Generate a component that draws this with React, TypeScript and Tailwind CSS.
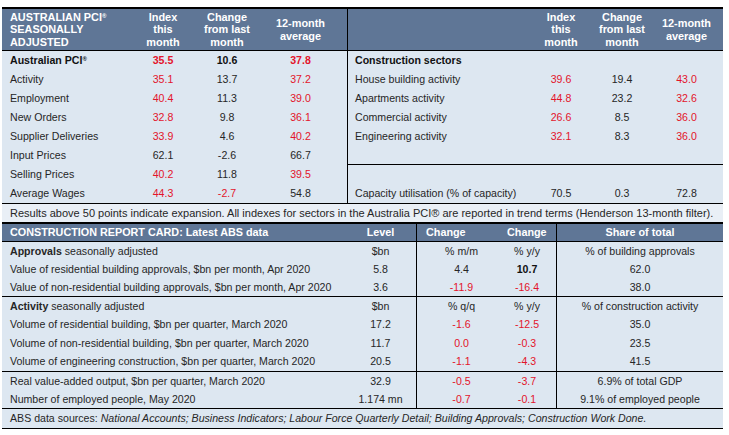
const RED = "text-[#e3142b]";

type Cell = { t: string; red?: boolean; bold?: boolean };

const pciRows: { label: string; bold?: boolean; v: Cell[] }[] = [
  { label: "Australian PCI", bold: true, v: [{ t: "35.5", red: true }, { t: "10.6" }, { t: "37.8", red: true }] },
  { label: "Activity", v: [{ t: "35.1", red: true }, { t: "13.7" }, { t: "37.2", red: true }] },
  { label: "Employment", v: [{ t: "40.4", red: true }, { t: "11.3" }, { t: "39.0", red: true }] },
  { label: "New Orders", v: [{ t: "32.8", red: true }, { t: "9.8" }, { t: "36.1", red: true }] },
  { label: "Supplier Deliveries", v: [{ t: "33.9", red: true }, { t: "4.6" }, { t: "40.2", red: true }] },
  { label: "Input Prices", v: [{ t: "62.1" }, { t: "-2.6" }, { t: "66.7" }] },
  { label: "Selling Prices", v: [{ t: "40.2", red: true }, { t: "11.8" }, { t: "39.5", red: true }] },
  { label: "Average Wages", v: [{ t: "44.3", red: true }, { t: "-2.7", red: true }, { t: "54.8" }] },
];

const sectorRows: { label: string; v: Cell[] }[] = [
  { label: "House building activity", v: [{ t: "39.6", red: true }, { t: "19.4" }, { t: "43.0", red: true }] },
  { label: "Apartments activity", v: [{ t: "44.8", red: true }, { t: "23.2" }, { t: "32.6", red: true }] },
  { label: "Commercial activity", v: [{ t: "26.6", red: true }, { t: "8.5" }, { t: "36.0", red: true }] },
  { label: "Engineering activity", v: [{ t: "32.1", red: true }, { t: "8.3" }, { t: "36.0", red: true }] },
];

type CardRow = { label: React.ReactNode; level: string; c1: Cell; c2: Cell; share: string };

const groups: { h: string; rows: CardRow[] }[] = [
  {
    h: "h-[55px]",
    rows: [
      { label: <span><b>Approvals</b> seasonally adjusted</span>, level: "$bn", c1: { t: "% m/m" }, c2: { t: "% y/y" }, share: "% of building approvals" },
      { label: "Value of residential building approvals, $bn per month, Apr 2020", level: "5.8", c1: { t: "4.4" }, c2: { t: "10.7", bold: true }, share: "62.0" },
      { label: "Value of non-residential building approvals, $bn per month, Apr 2020", level: "3.6", c1: { t: "-11.9", red: true }, c2: { t: "-16.4", red: true }, share: "38.0" },
    ],
  },
  {
    h: "h-[75px]",
    rows: [
      { label: <span><b>Activity</b> seasonally adjusted</span>, level: "$bn", c1: { t: "% q/q" }, c2: { t: "% y/y" }, share: "% of construction activity" },
      { label: "Volume of residential building, $bn per quarter, March 2020", level: "17.2", c1: { t: "-1.6", red: true }, c2: { t: "-12.5", red: true }, share: "35.0" },
      { label: "Volume of non-residential building, $bn per quarter, March 2020", level: "11.7", c1: { t: "0.0", red: true }, c2: { t: "-0.3", red: true }, share: "23.5" },
      { label: "Volume of engineering construction, $bn per quarter, March 2020", level: "20.5", c1: { t: "-1.1", red: true }, c2: { t: "-4.3", red: true }, share: "41.5" },
    ],
  },
  {
    h: "h-[37px]",
    rows: [
      { label: "Real value-added output, $bn per quarter, March 2020", level: "32.9", c1: { t: "-0.5", red: true }, c2: { t: "-3.7", red: true }, share: "6.9% of total GDP" },
      { label: "Number of employed people, May 2020", level: "1.174 mn", c1: { t: "-0.7", red: true }, c2: { t: "-0.1", red: true }, share: "9.1% of employed people" },
    ],
  },
];

function Val({ c, bold, w }: { c: Cell; bold?: boolean; w: string }) {
  return (
    <div className={`${w} text-center ${c.red ? RED : ""} ${bold || c.bold ? "font-bold text-[#111]" : ""}`}>{c.t}</div>
  );
}

export default function App() {
  return (
    <div className="w-[729px] h-[435px] bg-white pt-[7px] pl-[2px] font-['Liberation_Sans',Arial,sans-serif] text-[10.6px] leading-none text-[#262626]">
      <div className="w-[721px] bg-[#dde7f1]">
        {/* PCI block */}
        <div className="flex border-t-2 border-black">
          <div className="w-[345px] flex flex-col">
            <div className="h-[42px] flex items-center bg-[#5f7696] text-white font-bold text-[10.9px] leading-[12.5px] border-b border-black">
              <div className="w-[126px] pl-[8px]">
                AUSTRALIAN PCI<sup className="text-[6px]">®</sup>
                <br />
                SEASONALLY
                <br />
                ADJUSTED
              </div>
              <div className="w-[70px] text-center">Index<br />this<br />month</div>
              <div className="w-[58px] text-center">Change<br />from last<br />month</div>
              <div className="w-[89px] text-center">12-month<br />average</div>
            </div>
            {pciRows.map((r) => (
              <div key={r.label} className="h-[19px] flex items-center">
                <div className={`w-[126px] pl-[8px] ${r.bold ? "font-bold text-[#111]" : ""}`}>
                  {r.label}
                  {r.bold && <sup className="text-[6px]">®</sup>}
                </div>
                <Val c={r.v[0]} bold={r.bold} w="w-[70px]" />
                <Val c={r.v[1]} bold={r.bold} w="w-[58px]" />
                <Val c={r.v[2]} bold={r.bold} w="w-[89px]" />
              </div>
            ))}
          </div>
          <div className="flex-1 flex flex-col border-l border-black">
            <div className="h-[42px] flex items-center bg-[#5f7696] text-white font-bold text-[10.9px] leading-[12.5px] border-b border-black">
              <div className="w-[180px]" />
              <div className="w-[66px] text-center">Index<br />this<br />month</div>
              <div className="w-[56px] text-center">Change<br />from last<br />month</div>
              <div className="flex-1 text-center">12-month<br />average</div>
            </div>
            <div className="h-[19px] flex items-center pl-[7px] font-bold text-[#111]">Construction sectors</div>
            {sectorRows.map((r) => (
              <div key={r.label} className="h-[19px] flex items-center">
                <div className="w-[180px] pl-[7px]">{r.label}</div>
                <Val c={r.v[0]} w="w-[66px]" />
                <Val c={r.v[1]} w="w-[56px]" />
                <Val c={r.v[2]} w="flex-1" />
              </div>
            ))}
            <div className="h-[19px] border-b border-black" />
            <div className="flex-1 flex items-end pb-[4px]">
              <div className="w-[180px] pl-[7px]">Capacity utilisation (% of capacity)</div>
              <div className="w-[66px] text-center">70.5</div>
              <div className="w-[56px] text-center">0.3</div>
              <div className="flex-1 text-center">72.8</div>
            </div>
          </div>
        </div>

        <div className="h-[19px] flex items-center pl-[8px] text-[11px] border-t border-black bg-[#e9eff6]">
          Results above 50 points indicate expansion. All indexes for sectors in the Australia PCI® are reported in trend terms (Henderson 13-month filter).
        </div>

        {/* Report card */}
        <div className="h-[20px] flex items-center bg-[#5f7696] text-white font-bold text-[10.8px] border-t-2 border-b border-black">
          <div className="w-[343px] pl-[8px]">CONSTRUCTION REPORT CARD: Latest ABS data</div>
          <div className="w-[71px] text-center">Level</div>
          <div className="w-[90px] h-full flex items-center pl-[9px] border-l border-black">Change</div>
          <div className="w-[50px] pl-[1px]">Change</div>
          <div className="flex-1 h-full flex items-center justify-center border-l border-black">Share of total</div>
        </div>

        {groups.map((g, gi) => (
          <div key={gi} className={`${g.h} flex flex-col border-b border-black`}>
            {g.rows.map((r, ri) => (
              <div key={ri} className="flex-1 flex items-stretch">
                <div className="w-[343px] pl-[8px] flex items-center">{r.label}</div>
                <div className="w-[71px] flex items-center justify-center">{r.level}</div>
                <div className={`w-[90px] flex items-center justify-center border-l border-black ${r.c1.red ? RED : ""}`}>{r.c1.t}</div>
                <div className={`w-[50px] pr-[8px] flex items-center justify-center ${r.c2.red ? RED : ""} ${r.c2.bold ? "font-bold text-[#111]" : ""}`}>{r.c2.t}</div>
                <div className="flex-1 flex items-center justify-center border-l border-black">{r.share}</div>
              </div>
            ))}
          </div>
        ))}

        <div className="h-[20px] flex items-center pl-[8px] border-b border-black">
          <span>
            ABS data sources:{" "}
            <i>National Accounts; Business Indicators; Labour Force Quarterly Detail; Building Approvals; Construction Work Done.</i>
          </span>
        </div>
      </div>
    </div>
  );
}
